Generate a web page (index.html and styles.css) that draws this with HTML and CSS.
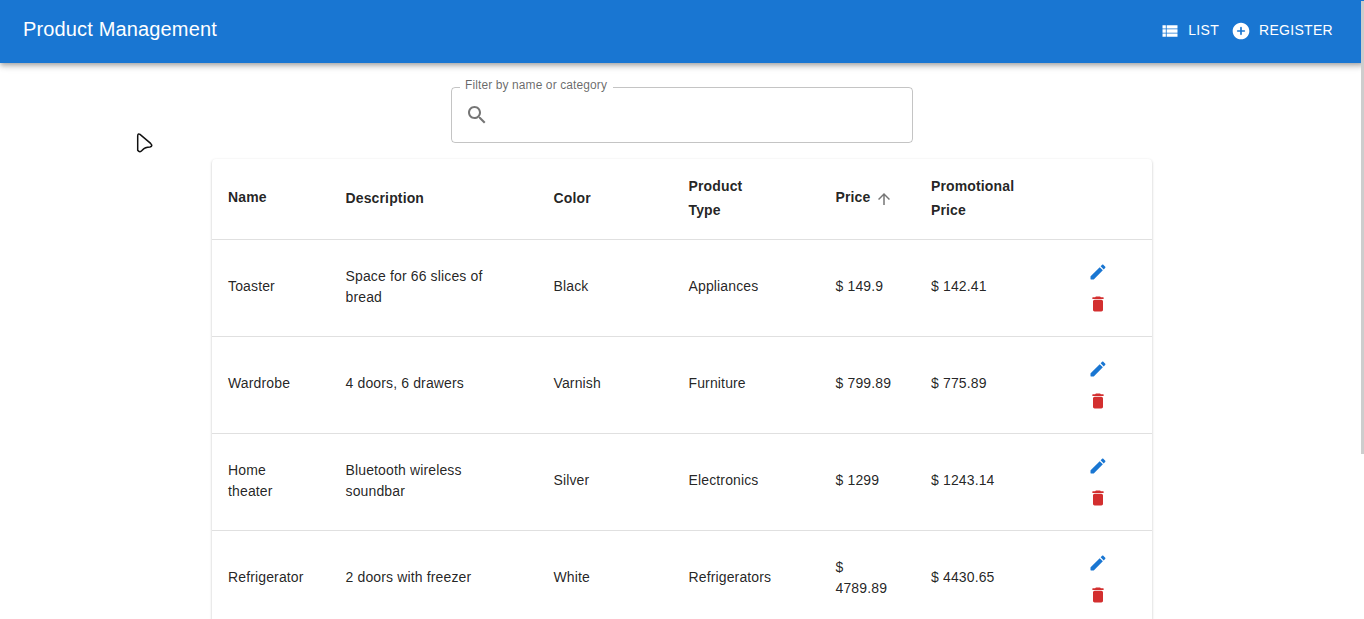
FILE: index.html
```html
<!DOCTYPE html>
<html lang="en">
<head>
<meta charset="utf-8">
<title>Product Management</title>
<link rel="stylesheet" href="styles.css">
</head>
<body>
<svg class="symbols" aria-hidden="true">
  <symbol id="edit" viewBox="0 0 24 24"><path d="M3 17.46v3.04c0 .28.22.5.5.5h3.04c.13 0 .26-.05.35-.15L17.81 9.94l-3.75-3.75L3.15 17.1c-.1.1-.15.22-.15.36zM20.71 7.04c.39-.39.39-1.02 0-1.41l-2.34-2.34c-.39-.39-1.02-.39-1.41 0l-1.83 1.83 3.75 3.75 1.83-1.83z"/></symbol>
  <symbol id="delete" viewBox="0 0 24 24"><path d="M6 19c0 1.1.9 2 2 2h8c1.1 0 2-.9 2-2V9c0-1.1-.9-2-2-2H8c-1.1 0-2 .9-2 2v10zM18 4h-2.5l-.71-.71c-.18-.18-.44-.29-.7-.29H9.91c-.26 0-.52.11-.7.29L8.5 4H6c-.55 0-1 .45-1 1s.45 1 1 1h12c.55 0 1-.45 1-1s-.45-1-1-1z"/></symbol>
</svg>
<header class="appbar">
  <h1 class="title">Product Management</h1>
  <nav class="nav">
    <a class="nav-link"><svg class="icon" viewBox="0 0 24 24"><path d="M3 14h4v-4H3v4zm0 5h4v-4H3v4zM3 9h4V5H3v4zm5 5h13v-4H8v4zm0 5h13v-4H8v4zM8 5v4h13V5H8z"/></svg><span>LIST</span></a>
    <a class="nav-link"><svg class="icon" viewBox="0 0 24 24"><path d="M12 2C6.48 2 2 6.48 2 12s4.48 10 10 10 10-4.48 10-10S17.52 2 12 2zm4 11h-3v3c0 .55-.45 1-1 1s-1-.45-1-1v-3H8c-.55 0-1-.45-1-1s.45-1 1-1h3V8c0-.55.45-1 1-1s1 .45 1 1v3h3c.55 0 1 .45 1 1s-.45 1-1 1z"/></svg><span>REGISTER</span></a>
  </nav>
</header>
<main class="content">
  <div class="filter">
    <label class="filter-label">Filter by name or category</label>
    <svg class="search" viewBox="0 0 24 24"><path d="M15.5 14h-.79l-.28-.27C15.41 12.59 16 11.11 16 9.5 16 5.91 13.09 3 9.5 3S3 5.91 3 9.5 5.91 16 9.5 16c1.61 0 3.09-.59 4.23-1.57l.27.28v.79l5 4.99L20.49 19l-4.99-5zm-6 0C7.01 14 5 11.99 5 9.5S7.01 5 9.5 5 14 7.01 14 9.5 11.99 14 9.5 14z"/></svg>
  </div>
  <section class="table">
    <div class="row head">
      <div class="cell sortable">Name</div><div class="cell">Description</div><div class="cell">Color</div><div class="cell">Product<br>Type</div>
      <div class="cell sortable"><span>Price</span><svg class="arrow" viewBox="0 0 24 24"><path d="M4 12l1.41 1.41L11 7.83V20h2V7.83l5.58 5.59L20 12l-8-8-8 8z"/></svg></div>
      <div class="cell">Promotional<br>Price</div><div class="cell"></div>
    </div>
    <div class="row">
      <div class="cell">Toaster</div><div class="cell">Space for 66 slices of<br>bread</div><div class="cell">Black</div><div class="cell">Appliances</div><div class="cell">$ 149.9</div><div class="cell">$ 142.41</div>
      <div class="actions"><svg class="icon edit"><use href="#edit"/></svg><svg class="icon delete"><use href="#delete"/></svg></div>
    </div>
    <div class="row">
      <div class="cell">Wardrobe</div><div class="cell">4 doors, 6 drawers</div><div class="cell">Varnish</div><div class="cell">Furniture</div><div class="cell">$ 799.89</div><div class="cell">$ 775.89</div>
      <div class="actions"><svg class="icon edit"><use href="#edit"/></svg><svg class="icon delete"><use href="#delete"/></svg></div>
    </div>
    <div class="row">
      <div class="cell">Home<br>theater</div><div class="cell">Bluetooth wireless<br>soundbar</div><div class="cell">Silver</div><div class="cell">Electronics</div><div class="cell">$ 1299</div><div class="cell">$ 1243.14</div>
      <div class="actions"><svg class="icon edit"><use href="#edit"/></svg><svg class="icon delete"><use href="#delete"/></svg></div>
    </div>
    <div class="row">
      <div class="cell">Refrigerator</div><div class="cell">2 doors with freezer</div><div class="cell">White</div><div class="cell">Refrigerators</div><div class="cell">$<br>4789.89</div><div class="cell">$ 4430.65</div>
      <div class="actions"><svg class="icon edit"><use href="#edit"/></svg><svg class="icon delete"><use href="#delete"/></svg></div>
    </div>
  </section>
</main>
<div class="scroll-thumb"></div>
<svg class="pointer" viewBox="0 0 20 24"><path d="M3.7 5Q3.700 1.900 6 3.400L16.600 12.400Q19.300 15.200 16 15.900Q11 15.900 8.700 18.800Q5.800 22.300 3.700 19.300Z"/></svg>
</body>
</html>
```
FILE: styles.css
```css
* { box-sizing: border-box; }
body {
  margin: 0;
  height: 619px;
  overflow: hidden;
  background: #fff;
  color: rgba(0, 0, 0, 0.87);
  font-family: "Liberation Sans", Arial, sans-serif;
  font-size: 14px;
}
.symbols { display: none; }
.icon { width: 20px; height: 20px; fill: currentColor; flex: none; }

.appbar {
  height: 63px;
  padding: 0 31px 0 23px;
  display: flex;
  justify-content: space-between;
  background: #1976d2;
  color: #fff;
  box-shadow: 0 2px 4px -1px rgba(0, 0, 0, 0.2), 0 4px 5px rgba(0, 0, 0, 0.14), 0 1px 10px rgba(0, 0, 0, 0.12);
}
.title { margin: 0; padding-top: 13px; font-size: 20px; font-weight: 400; line-height: 32px; letter-spacing: 0.15px; }
.nav { display: flex; gap: 12px; padding-top: 19px; }
.nav-link { display: flex; height: 24px; gap: 8px; letter-spacing: 0.3px; line-height: 22px; }
.nav-link .icon { margin-top: 2px; }

.content { display: flex; flex-direction: column; align-items: center; gap: 16px; padding-top: 24px; }
.filter {
  position: relative;
  width: 462px;
  height: 56px;
  padding: 0 13px;
  display: flex;
  align-items: center;
  border: 1px solid rgba(0, 0, 0, 0.23);
  border-radius: 4px;
}
.filter-label {
  position: absolute;
  top: -11px;
  left: 8px;
  width: 153px;
  padding-left: 5px;
  background: #fff;
  color: rgba(0, 0, 0, 0.6);
  font-size: 12px;
  line-height: 16px;
  letter-spacing: 0.1px;
  white-space: nowrap;
}
.search { width: 24px; height: 24px; fill: rgba(0, 0, 0, 0.54); }

.table {
  width: 940px;
  border-radius: 4px;
  background: #fff;
  box-shadow: 0 2px 1px -1px rgba(0, 0, 0, 0.2), 0 1px 1px rgba(0, 0, 0, 0.14), 0 1px 3px rgba(0, 0, 0, 0.2);
}
.row {
  display: grid;
  grid-template-columns: 117.5px 208px 135px 147px 95.5px 129px 108px;
  align-items: center;
  height: 97px;
  border-bottom: 1px solid #e0e0e0;
}
.cell { padding: 0 0 3px 16px; line-height: 21px; letter-spacing: 0.14px; white-space: nowrap; }
.head { height: 81px; font-weight: 700; }
.head .cell { line-height: 24px; padding-bottom: 2px; }
.head .sortable { display: flex; align-items: center; padding-bottom: 4px; }
.arrow { width: 18px; height: 18px; margin: 3px 0 0 4.5px; fill: rgba(0, 0, 0, 0.54); }
.actions { display: flex; flex-direction: column; align-items: center; gap: 12px; }
.edit { color: #1976d2; }
.delete { color: #d32f2f; }

.scroll-thumb { position: absolute; top: 1px; right: 0; width: 3px; height: 453px; background: #cdcdcd; }
.pointer { position: absolute; left: 134px; top: 131px; width: 20px; height: 24px; fill: #fff; stroke: #111; stroke-width: 1.5; }
```
